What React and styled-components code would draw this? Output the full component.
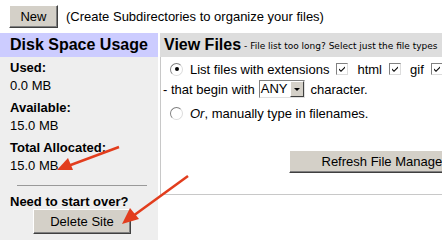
import React from "react";
import styled, { createGlobalStyle } from "styled-components";

const Global = createGlobalStyle`
  html, body {
    margin: 0;
    padding: 0;
    background: #ffffff;
    overflow: hidden;
  }
  body {
    font-family: "Liberation Sans", Arial, sans-serif;
    font-size: 13px;
    color: #000000;
  }
`;

const Page = styled.div`
  position: relative;
  width: 442px;
  height: 246px;
  overflow: hidden;
`;

const TopBar = styled.div`
  display: flex;
  align-items: center;
  gap: 8px;
  height: 33px;
  padding: 0 0 0 9px;
  box-sizing: border-box;
  white-space: nowrap;
`;

const Button = styled.button`
  font-family: "Liberation Sans", Arial, sans-serif;
  font-size: 13px;
  color: #000;
  background: #d4d0c8;
  width: ${(p) => p.$w}px;
  height: ${(p) => p.$h || 23}px;
  padding: 0;
  border: 1px solid;
  border-color: #ffffff #404040 #404040 #ffffff;
  box-shadow: inset -1px -1px 0 #808080;
  white-space: nowrap;
  flex-shrink: 0;
`;

const Hint = styled.span`
  font-size: 13px;
`;

const Main = styled.div`
  display: grid;
  grid-template-columns: 158px 284px;
  column-gap: 2px;
`;

const Sidebar = styled.div`
  display: flex;
  flex-direction: column;
`;

const PanelHead = styled.div`
  height: 24px;
  display: flex;
  align-items: center;
  padding-left: ${(p) => p.$pad}px;
  background: ${(p) => (p.$tone === "lavender" ? "#ccccff" : "#dddddd")};
  font-size: 16px;
  font-weight: bold;
  white-space: nowrap;
  overflow: hidden;
`;

const Small = styled.span`
  font-family: "DejaVu Sans", Verdana, sans-serif;
  font-size: 9px;
  font-weight: normal;
  margin-left: 3px;
  margin-top: 2px;
`;

const SideBody = styled.div`
  background: #eeeeee;
  height: 183px;
  padding: 2px 0 0 10px;
  box-sizing: border-box;
  display: flex;
  flex-direction: column;
`;

const Stat = styled.div`
  display: flex;
  flex-direction: column;
  margin-bottom: 4px;
`;

const Label = styled.div`
  font-weight: bold;
  line-height: ${(p) => (p.$tight ? 14 : 18)}px;
`;

const Value = styled.div`
  line-height: 18px;
`;

const Rule = styled.div`
  width: 130px;
  height: 1px;
  background: #999999;
  margin: 6px 0 9px 7px;
`;

const DeleteRow = styled.div`
  padding-left: 23px;
`;

const Content = styled.div`
  display: flex;
  flex-direction: column;
  overflow: hidden;
`;

const FileBody = styled.div`
  border-left: 1px solid #c8c8c8;
  border-bottom: 1px solid #c8c8c8;
  padding: 2px 0 21px 2px;
  white-space: nowrap;
`;

const OptRow = styled.div`
  display: flex;
  align-items: center;
  height: ${(p) => p.$h || 20}px;
  padding-left: ${(p) => p.$indent || 0}px;
  margin-top: ${(p) => p.$mt || 0}px;
`;

const RadioBox = styled.span`
  width: 11px;
  height: 11px;
  border-radius: 50%;
  border: 1px solid #808080;
  border-right-color: #dcdcdc;
  border-bottom-color: #dcdcdc;
  background: #ffffff;
  display: inline-flex;
  align-items: center;
  justify-content: center;
  margin-right: 7px;
  flex-shrink: 0;
  &::after {
    content: "";
    width: 4px;
    height: 4px;
    border-radius: 50%;
    background: ${(p) => (p.$on ? "#000" : "transparent")};
  }
`;

const CheckBox = styled.span`
  width: 12px;
  height: 12px;
  box-sizing: border-box;
  border: 1px solid #808080;
  border-right-color: #dcdcdc;
  border-bottom-color: #dcdcdc;
  background: #ffffff;
  display: inline-flex;
  align-items: center;
  justify-content: center;
  margin: 0 9px 0 7px;
  flex-shrink: 0;
`;

const Select = styled.span`
  display: inline-flex;
  align-items: stretch;
  height: 18px;
  box-sizing: border-box;
  border: 1px solid #808080;
  border-right-color: #e0e0e0;
  border-bottom-color: #e0e0e0;
  background: #ffffff;
  margin: 0 6px 0 4px;
`;

const SelectText = styled.span`
  padding: 0 2px 0 1px;
  font-size: 13px;
  line-height: 16px;
`;

const SelectArrow = styled.span`
  width: 14px;
  background: #d4d0c8;
  border: 1px solid;
  border-color: #ffffff #404040 #404040 #ffffff;
  box-sizing: border-box;
  display: flex;
  align-items: center;
  justify-content: center;
  &::after {
    content: "";
    border-left: 3px solid transparent;
    border-right: 3px solid transparent;
    border-top: 3px solid #000;
  }
`;

const ButtonRow = styled.div`
  display: flex;
  padding-left: 126px;
  margin-top: 27px;
`;

const Overlay = styled.svg`
  position: absolute;
  left: 0;
  top: 0;
  pointer-events: none;
`;

const Tick = () => (
  <svg width="8" height="8" viewBox="0 0 8 8">
    <path d="M1 3.5 L3 5.5 L7 1.5 L7 3 L3 7 L1 5 Z" fill="#000" />
  </svg>
);

const stats = [
  { label: "Used:", value: "0.0 MB" },
  { label: "Available:", value: "15.0 MB" },
  { label: "Total Allocated:", value: "15.0 MB" },
];

export default function App() {
  return (
    <Page>
      <Global />
      <TopBar>
        <Button $w={49}>New</Button>
        <Hint>(Create Subdirectories to organize your files)</Hint>
      </TopBar>
      <Main>
        <Sidebar>
          <PanelHead $tone="lavender" $pad={10}>
            Disk Space Usage
          </PanelHead>
          <SideBody>
            {stats.map((s) => (
              <Stat key={s.label}>
                <Label>{s.label}</Label>
                <Value>{s.value}</Value>
              </Stat>
            ))}
            <Rule />
            <Label $tight>Need to start over?</Label>
            <DeleteRow>
              <Button $w={98} $h={25}>
                Delete Site
              </Button>
            </DeleteRow>
          </SideBody>
        </Sidebar>
        <Content>
          <PanelHead $tone="gray" $pad={4}>
            View Files
            <Small>- File list too long? Select just the file types</Small>
          </PanelHead>
          <FileBody>
            <OptRow $indent={7}>
              <RadioBox $on />
              List files with extensions
              <CheckBox>
                <Tick />
              </CheckBox>
              html
              <CheckBox>
                <Tick />
              </CheckBox>
              gif
              <CheckBox>
                <Tick />
              </CheckBox>
              jpg
            </OptRow>
            <OptRow>
              - that begin with
              <Select>
                <SelectText>ANY</SelectText>
                <SelectArrow />
              </Select>
              character.
            </OptRow>
            <OptRow $indent={7} $mt={4}>
              <RadioBox />
              <i>Or</i>, manually type in filenames.
            </OptRow>
            <ButtonRow>
              <Button $w={190} $h={23}>
                Refresh File Manager
              </Button>
            </ButtonRow>
          </FileBody>
        </Content>
      </Main>
      <Overlay width="442" height="246" viewBox="0 0 442 246">
        <line x1="119" y1="147" x2="68" y2="166" stroke="#e23d1d" strokeWidth="2.5" />
        <polygon points="57,170 73,170 68,158" fill="#e23d1d" />
        <line x1="188" y1="176" x2="133" y2="216" stroke="#e23d1d" strokeWidth="2.5" />
        <polygon points="122,224 139,219 130,208" fill="#e23d1d" />
      </Overlay>
    </Page>
  );
}
